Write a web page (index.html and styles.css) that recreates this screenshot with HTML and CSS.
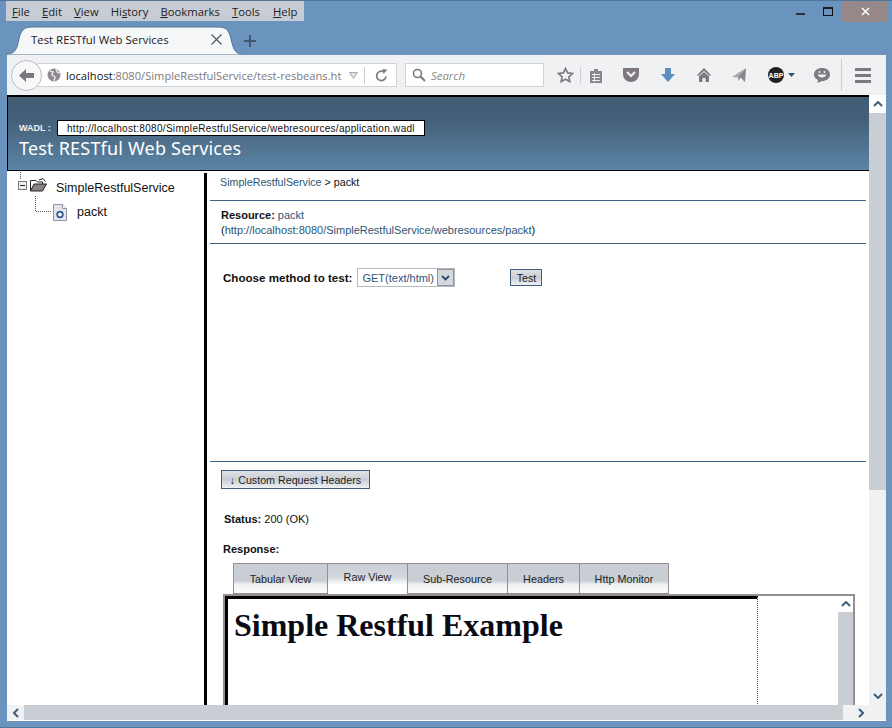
FILE: index.html
```html
<!DOCTYPE html>
<html lang="en">
<head>
    <meta charset="UTF-8">
    <meta name="viewport" content="width=device-width, initial-scale=1.0">
    <title>Test RESTful Web Services</title>
    <link rel="stylesheet" href="styles.css">
</head>
<body>
    <!-- menu bar and window buttons -->
    <div class="titlebar">
        <div class="menubar">
            <span><u>F</u>ile</span>
            <span><u>E</u>dit</span>
            <span><u>V</u>iew</span>
            <span>Hi<u>s</u>tory</span>
            <span><u>B</u>ookmarks</span>
            <span><u>T</u>ools</span>
            <span><u>H</u>elp</span>
        </div>
        <div class="winbtns">
            <svg class="winbtn-min" width="9" height="3" viewBox="0 0 9 3"><path d="M0 1h9" stroke="#111" stroke-width="1.5"/></svg>
            <svg class="winbtn-max" width="10" height="9" viewBox="0 0 10 9"><rect x=".5" y="1" width="9" height="7.5" fill="none" stroke="#111"/><path d="M0 1h10" stroke="#111" stroke-width="1.6"/></svg>
            <div class="winbtn-close">
                <svg width="9" height="9" viewBox="0 0 9 9"><path d="M1 1l7 7M8 1l-7 7" stroke="#fff" stroke-width="1.5"/></svg>
            </div>
        </div>
    </div>

    <!-- tab strip -->
    <div class="tabstrip">
        <div class="tab">
            <svg class="tab-shape" width="236" height="29" viewBox="0 0 236 29"><path d="M0 29V28C10 28 11 22 13 13C15 4 18 1 26 1H212C220 1 223 4 225 13C227 22 229 28 236 28V29Z" fill="#f6f7f8" stroke="#4f7698"/></svg>
            <span class="tab-title">Test RESTful Web Services</span>
            <svg class="tab-close" width="11" height="11" viewBox="0 0 11 11"><path d="M.5.5l10 10M10.5.5l-10 10" stroke="#4a5560" stroke-width="1.1"/></svg>
        </div>
        <svg class="tab-new" width="14" height="14" viewBox="0 0 14 14"><path d="M7 1v12M1 7h12" stroke="#44586c" stroke-width="2"/></svg>
    </div>

    <!-- nav toolbar -->
    <div class="toolbar">
        <div class="backbtn">
            <svg width="15" height="13" viewBox="0 0 15 13"><path d="M7 0L0 6.500L7 13V9H15V4H7Z" fill="#7c777d"/></svg>
        </div>
        <div class="urlbar">
            <svg class="globe" width="14" height="14" viewBox="0 0 14 14"><circle cx="7" cy="7" r="6.500" fill="#8f8a90"/><path d="M3 3l3 1-1 3 3 2-1 4M9 1l1 3 3 1" fill="none" stroke="#e8e8ea" stroke-width="1.400"/></svg>
            <span class="url"><b>localhost</b>:8080/SimpleRestfulService/test-resbeans.ht</span>
            <svg class="url-drop" width="9" height="7" viewBox="0 0 9 7"><path d="M.5.500h8L4.500 6.500Z" fill="#dfe1e4" stroke="#a5a8ad"/></svg>
            <i class="url-sep"></i>
            <svg class="reload" width="13" height="13" viewBox="0 0 13 13"><path d="M11 7.500A4.700 4.700 0 1 1 8.500 2.700" fill="none" stroke="#807b81" stroke-width="1.800"/><path d="M7.500 0L12.500 .8L8.500 5Z" fill="#807b81"/></svg>
        </div>
        <div class="searchbar">
            <svg width="14" height="14" viewBox="0 0 14 14"><circle cx="5.500" cy="5.500" r="4" fill="none" stroke="#7d787e" stroke-width="1.600"/><path d="M8.500 8.500L13 13" stroke="#7d787e" stroke-width="2"/></svg>
            <span>Search</span>
        </div>
        <div class="tools">
            <svg class="t-star" width="17" height="16" viewBox="0 0 17 16"><path d="M8.500 1.500l2.100 4.400 4.800.6-3.500 3.300.9 4.800-4.300-2.400-4.300 2.400.9-4.800L1.600 6.500l4.800-.6Z" fill="#f3f4f5" stroke="#7f7a80" stroke-width="1.700"/></svg>
            <i class="t-sep"></i>
            <svg class="t-clip" width="14" height="15" viewBox="0 0 14 15"><path d="M1 3h4V1h4v2h4v12H1Z" fill="#8a858b"/><path d="M3 6.500h8M3 9.500h8M3 12.500h8M5.500 5v9" stroke="#eff1f3"/></svg>
            <svg class="t-pocket" width="16" height="14" viewBox="0 0 16 14"><path d="M0 0H16V6C16 11 12 14 8 14C4 14 0 11 0 6Z" fill="#7d787e"/><path d="M4 4l4 4 4-4" fill="none" stroke="#f0f1f3" stroke-width="2.200"/></svg>
            <svg class="t-down" width="14" height="14" viewBox="0 0 14 14"><path d="M4 0H10V6H14L7 14L0 6H4Z" fill="#5f8fbe"/></svg>
            <svg class="t-home" width="14" height="14" viewBox="0 0 14 14"><path d="M7 0L14 7L13 8L7 3L1 8L0 7Z" fill="#7f7a80"/><path d="M2 8L7 4L12 8V14H8.500V10H5.500V14H2Z" fill="#7f7a80"/></svg>
            <svg class="t-send" width="14" height="14" viewBox="0 0 14 14"><path d="M14 0L13 14L8.500 9.500L6.500 13L6 8.500Z" fill="#8a858b"/><path d="M14 0L0 9L5 9.500Z" fill="#a8a4a9"/></svg>
            <div class="t-abp"><span>ABP</span></div>
            <svg class="t-caret" width="7" height="4" viewBox="0 0 7 4"><path d="M0 0H7L3.500 4Z" fill="#33546f"/></svg>
            <svg class="t-chat" width="16" height="15" viewBox="0 0 16 15"><path d="M8 0C12.500 0 16 2.500 16 6.500S12.500 13 8 13L3.500 15L4 12C1.500 11 0 9 0 6.500C0 2.500 3.500 0 8 0Z" fill="#7f7a80"/><path d="M3.500 6.500C5 10.500 11 10.500 12.500 6.500Z" fill="#eff1f3"/><circle cx="5.500" cy="4" r="1" fill="#eff1f3"/><circle cx="10.500" cy="4" r="1" fill="#eff1f3"/></svg>
            <i class="t-sep t-sep-long"></i>
            <div class="t-burger"><i></i><i></i><i></i></div>
        </div>
    </div>

    <!-- page area -->
    <div class="viewport">
        <div class="viewport-row">
            <div class="page">
                <header class="banner">
                    <div class="wadl">
                        <span class="wadl-label">WADL :</span>
                        <span class="wadl-url">http://localhost:8080/SimpleRestfulService/webresources/application.wadl</span>
                    </div>
                    <h1 class="banner-title">Test RESTful Web Services</h1>
                </header>
                <div class="split">
                    <nav class="tree">
                        <svg class="tree-lines" width="50" height="44" viewBox="0 0 50 44"><path d="M3.500 0V8M18.500 24V39.500H34" fill="none" stroke="#555" stroke-dasharray="1 1"/></svg>
                        <div class="tree-root">
                            <svg class="tree-toggle" width="9" height="9" viewBox="0 0 9 9"><rect x=".5" y=".5" width="8" height="8" fill="#eee" stroke="#777"/><path d="M2 4.500h5" stroke="#222"/></svg>
                            <svg class="tree-folder" width="17" height="14" viewBox="0 0 17 14"><path d="M.5 13V2.500H6L7.500 4H12.500V6" fill="#fff" stroke="#222"/><path d="M.5 13L4 6H16.500L12.500 13Z" fill="#8a8280" stroke="#222"/><path d="M9 2l4-1.500 2.500 3" fill="none" stroke="#222"/></svg>
                            <span>SimpleRestfulService</span>
                        </div>
                        <div class="tree-leaf">
                            <svg width="14" height="17" viewBox="0 0 14 17"><path d="M.5.500H9.500L13.500 4.500V16.500H.5Z" fill="#e4e6ea" stroke="#8c98a6"/><path d="M9.500.500V4.500H13.500" fill="#fff" stroke="#8c98a6"/><circle cx="7" cy="10.500" r="2.800" fill="#fff" stroke="#2d5c8c" stroke-width="1.800"/></svg>
                            <span>packt</span>
                        </div>
                    </nav>
                    <main class="detail">
                        <div class="crumbs"><a href="#">SimpleRestfulService</a> &gt; packt</div>
                        <div class="resource">
                            <div><b>Resource:</b> <a href="#">packt</a></div>
                            <div>(<a href="#">http://localhost:8080/SimpleRestfulService/webresources/packt</a>)</div>
                        </div>
                        <div class="method">
                            <b>Choose method to test:</b>
                            <div class="select">
                                <span>GET(text/html)</span>
                                <i class="select-arrow"><svg width="9" height="6" viewBox="0 0 9 6"><path d="M1 1l3.500 3.500L8 1" fill="none" stroke="#2c4a66" stroke-width="1.800"/></svg></i>
                            </div>
                            <button class="btn btn-test">Test</button>
                        </div>
                        <div class="result">
                            <button class="btn btn-headers">↓ Custom Request Headers</button>
                            <div class="status"><b>Status:</b> 200 (OK)</div>
                            <div class="response-label">Response:</div>
                            <div class="tabs">
                                <span class="view-tab tab-tabular">Tabular View</span>
                                <span class="view-tab tab-raw active">Raw View</span>
                                <span class="view-tab tab-sub">Sub-Resource</span>
                                <span class="view-tab tab-headers">Headers</span>
                                <span class="view-tab tab-monitor">Http Monitor</span>
                            </div>
                            <div class="response-panel">
                                <div class="raw-frame">
                                    <h1>Simple Restful Example</h1>
                                </div>
                                <div class="panel-gap"></div>
                                <div class="panel-scroll">
                                    <div class="scroll-btn inner-btn"><svg width="10" height="6" viewBox="0 0 10 6"><path d="M1 5l4-4 4 4" fill="none" stroke="#3d5f7d" stroke-width="2"/></svg></div>
                                    <div class="panel-thumb"></div>
                                </div>
                            </div>
                        </div>
                    </main>
                </div>
            </div>
            <div class="vscroll">
                <div class="scroll-btn"><svg width="10" height="6" viewBox="0 0 10 6"><path d="M1 5l4-4 4 4" fill="none" stroke="#3d5f7d" stroke-width="2"/></svg></div>
                <div class="vthumb"></div>
                <div class="vtrack"></div>
                <div class="scroll-btn scroll-btn-down"><svg width="10" height="6" viewBox="0 0 10 6"><path d="M1 1l4 4 4-4" fill="none" stroke="#3d5f7d" stroke-width="2"/></svg></div>
            </div>
        </div>
        <div class="hscroll">
            <div class="hbtn"><svg width="6" height="10" viewBox="0 0 6 10"><path d="M5 1L1 5l4 4" fill="none" stroke="#3d5f7d" stroke-width="2"/></svg></div>
            <div class="hthumb"></div>
            <div class="hbtn hbtn-right"><svg width="6" height="10" viewBox="0 0 6 10"><path d="M1 1l4 4-4 4" fill="none" stroke="#3d5f7d" stroke-width="2"/></svg></div>
        </div>
    </div>
</body>
</html>
```

FILE: styles.css
```css
* {
    box-sizing: border-box;
}

html, body {
    margin: 0;
    height: 100%;
    overflow: hidden;
}

body {
    display: flex;
    flex-direction: column;
    background: #6a93bd;
    border-top: 1px solid #4f7698;
    border-bottom: 1px solid #4f7698;
    font-family: "Liberation Sans", Arial, sans-serif;
    font-size: 11px;
    color: #111;
}

/* title bar */
.titlebar {
    display: flex;
    justify-content: space-between;
    height: 25px;
    padding-left: 6px;
    flex: none;
}

.menubar {
    display: flex;
    align-items: center;
    width: 298px;
    height: 20px;
    background: #c8cdd5;
    font-family: "Open Sans", sans-serif;
    font-size: 11.300px;
    color: #222;
}

.menubar span:nth-child(1) { margin-left: 6px; }
.menubar span:nth-child(2) { margin-left: 12px; }
.menubar span:nth-child(3) { margin-left: 12px; }
.menubar span:nth-child(4) { margin-left: 12px; }
.menubar span:nth-child(5) { margin-left: 12px; }
.menubar span:nth-child(6) { margin-left: 12px; }
.menubar span:nth-child(7) { margin-left: 13px; }

.winbtns {
    display: flex;
    align-items: flex-start;
    padding-right: 4px;
}

.winbtn-min {
    margin-top: 12px;
}

.winbtn-max {
    margin: 6px 9px 0 18px;
}

.winbtn-close {
    display: flex;
    align-items: center;
    justify-content: center;
    width: 46px;
    height: 21px;
    background: #968788;
}

/* tabs */
.tabstrip {
    display: flex;
    align-items: flex-start;
    height: 29px;
    flex: none;
    padding-left: 6px;
}

.tab {
    position: relative;
    display: flex;
    align-items: center;
    width: 236px;
    height: 29px;
    padding: 0 0 2px 25px;
    font-family: "Open Sans", sans-serif;
    font-size: 11.400px;
    color: #222;
}

.tab-shape {
    position: absolute;
    left: 0;
    top: 0;
}

.tab-title, .tab-close {
    position: relative;
}

.tab-close {
    margin-left: 42px;
}

.tab-new {
    margin: 8px 0 0 1px;
}

/* toolbar */
.toolbar {
    display: flex;
    align-items: center;
    height: 40px;
    margin: 0 6px 0 7px;
    flex: none;
    background: #eff1f3;
}

.backbtn {
    display: flex;
    align-items: center;
    justify-content: center;
    position: relative;
    z-index: 1;
    width: 31px;
    height: 31px;
    margin-left: 4px;
    background: #f7f8f9;
    border: 1px solid #b9bdc4;
    border-radius: 50%;
}

.urlbar {
    display: flex;
    align-items: center;
    width: 360px;
    height: 24px;
    margin-left: -5px;
    padding-left: 9px;
    background: #fff;
    border: 1px solid #d0d4da;
}

.globe {
    flex: none;
}

.url {
    width: 275px;
    flex: none;
    margin-left: 5px;
    white-space: nowrap;
    font-family: "Open Sans", sans-serif;
    font-size: 11.150px;
    color: #7d787e;
}

.url b {
    font-weight: 400;
    color: #111;
}

.url-drop {
    margin-left: 8px;
}

.url-sep {
    width: 1px;
    height: 17px;
    margin-left: 6px;
    background: #c9cdd3;
}

.reload {
    margin-left: 10px;
}

.searchbar {
    display: flex;
    align-items: center;
    width: 139px;
    height: 24px;
    margin-left: 8px;
    padding-left: 6px;
    background: #fff;
    border: 1px solid #d0d4da;
    font-family: "Open Sans", sans-serif;
    font-size: 11.400px;
    font-style: italic;
    color: #8a8a8a;
}

.searchbar span {
    margin-left: 5px;
}

.tools {
    display: flex;
    align-items: center;
}

.t-star { margin-left: 13px; }
.t-sep {
    width: 1px;
    height: 16px;
    margin-left: 6px;
    background: #c9cdd3;
}
.t-clip { margin-left: 8px; }
.t-pocket { margin-left: 20px; }
.t-down { margin-left: 22px; }
.t-home { margin-left: 22px; }
.t-send { margin-left: 21px; }

.t-abp {
    display: flex;
    align-items: center;
    justify-content: center;
    width: 16px;
    height: 16px;
    margin-left: 22px;
    background: #222;
    border-radius: 50%;
    font-size: 7px;
    font-weight: 700;
    color: #fff;
}

.t-caret { margin-left: 4px; }
.t-chat { margin-left: 19px; }
.t-sep-long {
    height: 32px;
    margin-left: 11px;
}

.t-burger {
    display: flex;
    flex-direction: column;
    gap: 3px;
    width: 16px;
    margin-left: 13px;
}

.t-burger i {
    height: 3px;
    background: #7d787e;
}

/* page area */
.viewport {
    display: flex;
    flex-direction: column;
    flex: 1;
    min-height: 0;
    margin: 0 6px 6px 7px;
}

.viewport-row {
    display: flex;
    flex: 1;
    min-height: 0;
}

.page {
    display: flex;
    flex-direction: column;
    flex: 1;
    min-width: 0;
    background: #fff;
}

.banner {
    height: 76px;
    flex: none;
    padding: 23px 0 0 11px;
    background: linear-gradient(#425c74, #445f78 30%, #5c85a6);
    border-top: 2px solid #000;
    border-left: 1px solid #000;
    border-bottom: 1px solid #000;
}

.wadl {
    display: flex;
    align-items: center;
}

.wadl-label {
    width: 38px;
    font-size: 9px;
    font-weight: 700;
    color: #eef1f4;
}

.wadl-url {
    width: 368px;
    height: 16px;
    padding-left: 9px;
    background: #fff;
    border: 1px solid #000;
    font-size: 10px;
    line-height: 15px;
    letter-spacing: .3px;
}

.banner-title {
    margin: 1px 0 0;
    font-family: "Noto Sans", sans-serif;
    font-size: 18px;
    font-weight: 400;
    line-height: 23px;
    letter-spacing: .2px;
    color: #fff;
}

.split {
    display: flex;
    flex: 1;
    min-height: 0;
}

/* left tree */
.tree {
    position: relative;
    width: 197px;
    flex: none;
    padding: 7px 0 0 11px;
    font-size: 12.500px;
}

.tree-lines {
    position: absolute;
    left: 10px;
    top: 1px;
}

.tree-root {
    position: relative;
    display: flex;
    align-items: center;
    height: 19px;
}

.tree-toggle {
    flex: none;
    margin-top: -4px;
}

.tree-folder {
    flex: none;
    margin: -5px 0 0 3px;
}

.tree-root span {
    margin-left: 9px;
}

.tree-leaf {
    display: flex;
    align-items: center;
    height: 20px;
    margin: 5px 0 0 35px;
}

.tree-leaf span {
    margin-left: 10px;
}

/* right side */
.detail {
    flex: 1;
    min-width: 0;
    border-left: 3px solid #000;
    margin-top: 2px;
    padding: 0 3px 0 3px;
    overflow: hidden;
}

a {
    color: #2d5578;
    text-decoration: none;
}

.crumbs {
    height: 28px;
    padding: 3px 0 0 10px;
    font-size: 10.700px;
    line-height: 13px;
    border-bottom: 1px solid #3f6485;
}

.resource {
    height: 43px;
    padding: 7px 0 0 11px;
    line-height: 15px;
    border-bottom: 1px solid #3f5f7f;
}

.method {
    display: flex;
    align-items: flex-start;
    height: 218px;
    padding: 24px 0 0 13px;
    border-bottom: 1px solid #3f6485;
}

.method b {
    font-size: 11.600px;
    line-height: 19px;
}

.select {
    display: flex;
    align-items: center;
    justify-content: space-between;
    width: 98px;
    height: 19px;
    margin-left: 5px;
    padding-left: 4px;
    background: #fff;
    border: 1px solid #b5bac1;
    color: #2d5578;
}

.select-arrow {
    display: flex;
    align-items: center;
    justify-content: center;
    width: 17px;
    height: 17px;
    background: #d4d8dd;
    border: 1px solid #8f959c;
}

.btn {
    padding: 0;
    background: linear-gradient(#dfe2e6, #c9ced5 50%, #eff1f3);
    border: 1px solid #3f5f7f;
    font: 10.700px "Liberation Sans", Arial, sans-serif;
    color: #222;
}

.btn-test {
    width: 32px;
    height: 17px;
    margin: 1px 0 0 55px;
}

.btn-headers {
    display: block;
    width: 149px;
    height: 19px;
}

.result {
    padding: 8px 0 0 11px;
}

.status {
    margin: 23px 0 0 3px;
    line-height: 14px;
}

.response-label {
    margin: 16px 0 0 2px;
    font-size: 11px;
    font-weight: 700;
    line-height: 14px;
}

/* response tabs */
.tabs {
    display: flex;
    height: 31px;
    margin: 7px 0 0 12px;
}

.view-tab {
    display: flex;
    align-items: center;
    justify-content: center;
    height: 31px;
    background: linear-gradient(#c9ced5, #c9ced5 58%, #eef0f2 70%, #fbfcfc);
    border: 1px solid #968e90;
    border-left-width: 0;
    font-size: 10.800px;
    color: #222;
}

.tab-tabular { width: 95px; border-left-width: 1px; }
.tab-raw { width: 80px; }
.tab-sub { width: 100px; }
.tab-headers { width: 72px; }
.tab-monitor { width: 89px; }

.view-tab.active {
    padding-bottom: 4px;
    background: linear-gradient(#c9ced5, #d5d9de 45%, #fff 70%);
    border-bottom: 0;
}

.response-panel {
    display: flex;
    width: 632px;
    height: 116px;
    margin-left: 2px;
    border-top: 2px solid #968e90;
    border-left: 2px solid #968e90;
    border-right: 2px solid #968e90;
}

.raw-frame {
    width: 533px;
    flex: none;
    padding: 8px 0 0 6px;
    border-top: 3px solid #000;
    border-left: 3px solid #000;
    border-right: 1px dotted #555;
}

.raw-frame h1 {
    margin: 0;
    font-family: "Liberation Serif", "Times New Roman", serif;
    font-size: 32px;
    line-height: 37px;
    color: #0a0a14;
}

.panel-gap {
    flex: 1;
}

.panel-scroll {
    display: flex;
    flex-direction: column;
    width: 15px;
    flex: none;
}

.panel-thumb {
    flex: 1;
    background: #c9ced5;
}

/* scrollbars */
.vscroll {
    display: flex;
    flex-direction: column;
    width: 17px;
    flex: none;
    background: #eff1f3;
}

.scroll-btn {
    display: flex;
    align-items: center;
    justify-content: center;
    height: 18px;
    flex: none;
    background: #fff;
}

.inner-btn {
    height: 16px;
}

.scroll-btn-down {
    background: #eff1f3;
}

.vthumb {
    height: 377px;
    flex: none;
    background: #c9ced5;
}

.vtrack {
    flex: 1;
}

.hscroll {
    display: flex;
    height: 16px;
    flex: none;
    background: #eff1f3;
    border-bottom: 1px solid #fff;
}

.hbtn {
    display: flex;
    align-items: center;
    justify-content: center;
    width: 17px;
    flex: none;
}

.hbtn-right {
    width: 43px;
    padding-right: 7px;
}

.hthumb {
    flex: 1;
    background: #c9ced5;
}
```
